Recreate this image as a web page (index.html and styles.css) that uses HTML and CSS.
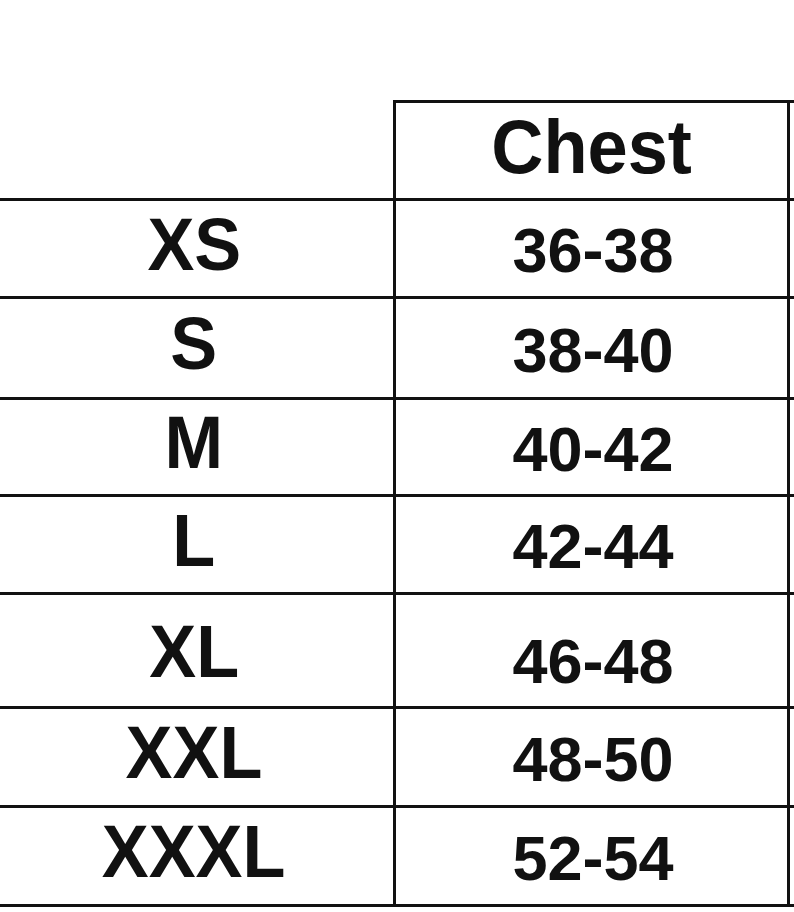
FILE: index.html
```html
<!DOCTYPE html>
<html lang="en">
<head>
<meta charset="utf-8">
<title>Size chart</title>
<link rel="stylesheet" href="styles.css">
</head>
<body>
<div class="chart">
  <div class="cell head blank"></div>
  <div class="cell head title"><span class="txt">Chest</span></div>
  <div class="cell head edge"></div>

  <div class="cell size"><span class="txt">XS</span></div>
  <div class="cell num"><span class="txt">36-38</span></div>
  <div class="cell edge"></div>

  <div class="cell size"><span class="txt">S</span></div>
  <div class="cell num"><span class="txt">38-40</span></div>
  <div class="cell edge"></div>

  <div class="cell size"><span class="txt">M</span></div>
  <div class="cell num"><span class="txt">40-42</span></div>
  <div class="cell edge"></div>

  <div class="cell size"><span class="txt">L</span></div>
  <div class="cell num"><span class="txt">42-44</span></div>
  <div class="cell edge"></div>

  <div class="cell size size-low"><span class="txt">XL</span></div>
  <div class="cell num num-low"><span class="txt">46-48</span></div>
  <div class="cell edge"></div>

  <div class="cell size"><span class="txt">XXL</span></div>
  <div class="cell num"><span class="txt">48-50</span></div>
  <div class="cell edge"></div>

  <div class="cell size"><span class="txt">XXXL</span></div>
  <div class="cell num"><span class="txt">52-54</span></div>
  <div class="cell edge"></div>
</div>
</body>
</html>
```
FILE: styles.css
```css
html, body {
  margin: 0;
  padding: 0;
  background: #ffffff;
}

body {
  width: 794px;
  height: 912px;
  overflow: hidden;
  font-family: "Liberation Sans", Arial, sans-serif;
  font-weight: bold;
  color: #111111;
}

.chart {
  margin-top: 100px;
  display: grid;
  grid-template-columns: 396px 394px 1fr;
  grid-template-rows: 101px 98px 101px 97px 98px 114px 99px 99px;
}

.cell {
  box-sizing: border-box;
  display: flex;
  align-items: center;
  justify-content: center;
  border-bottom: 3px solid #111111;
  line-height: 1;
  white-space: nowrap;
}

.head.title,
.head.edge {
  border-top: 3px solid #111111;
}

.size,
.blank,
.num,
.title {
  border-right: 3px solid #111111;
}

.txt {
  display: inline-block;
}

.title {
  font-size: 76px;
  padding-bottom: 8px;
}

.title .txt {
  transform: scaleX(0.95);
}

.size {
  font-size: 74px;
  padding-bottom: 8px;
  padding-right: 5px;
}

.size .txt {
  transform: scaleX(0.95);
}

.size-low {
  padding-bottom: 0;
  padding-top: 2px;
}

.num {
  font-size: 63px;
  padding-top: 4px;
  padding-left: 3px;
}

.num-low {
  padding-top: 22px;
}
```
